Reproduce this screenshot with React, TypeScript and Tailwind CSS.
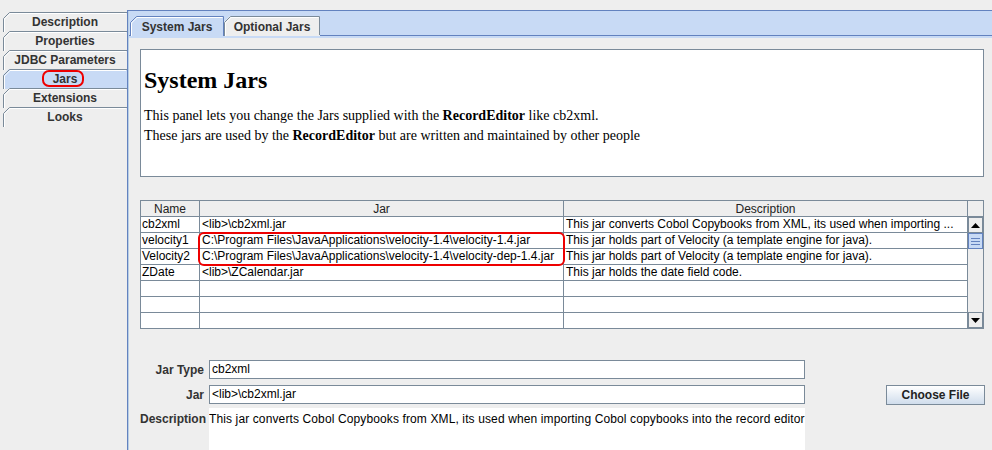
import React from "react";

function SideTab({ label, selected, circled }: { label: string; selected?: boolean; circled?: boolean }) {
  return (
    <div className="relative h-[19px] w-[124px] flex items-center justify-center">
      <svg className="absolute left-0 top-0" width="124" height="20" viewBox="0 0 124 20">
        <path d="M0 6 L6 0 H124 V20 H0 Z" fill={selected ? "#c8daf5" : "#eeeeee"} />
        <path d="M0.5 20 V6.5 L6.5 0.5 H124" fill="none" stroke="#7a8a99" />
        <path d="M1.5 20 V7 L7 1.5 H123" fill="none" stroke="#ffffff" />
      </svg>
      <span className="relative text-[12px] font-bold leading-[14px] text-[#333333] mt-[1px]">{label}</span>
      {circled ? (
        <div className="absolute left-[39px] top-[1px] w-[42px] h-[17px] rounded-[7px] border-2 border-[#ee0000]" />
      ) : null}
    </div>
  );
}

function TopTab({ label, selected, w }: { label: string; selected?: boolean; w: number }) {
  return (
    <div className="relative h-[19px] flex items-center justify-center" style={{ width: w }}>
      <svg className="absolute left-0 top-0" width={w} height="20" viewBox={`0 0 ${w} 20`}>
        <path d={`M0 6 L6 0 H${w} V20 H0 Z`} fill={selected ? "#c8daf5" : "#eeeeee"} />
        <path
          d={`M0.5 20 V6.5 L6.5 0.5 H${w - 0.5} V${selected ? 20 : 19}`}
          fill="none"
          stroke={selected ? "#6382bf" : "#7a8a99"}
        />
        <path d={`M1.5 20 V7 L7 1.5 H${w - 1.5}`} fill="none" stroke="#ffffff" />
      </svg>
      <span className="relative text-[12px] font-bold leading-[14px] text-[#333333] mt-[2px]">{label}</span>
    </div>
  );
}

const rows: [string, string, string][] = [
  ["cb2xml", "<lib>\\cb2xml.jar", "This jar converts Cobol Copybooks from XML, its used when importing ..."],
  ["velocity1", "C:\\Program Files\\JavaApplications\\velocity-1.4\\velocity-1.4.jar", "This jar holds part of Velocity (a template engine for java)."],
  ["Velocity2", "C:\\Program Files\\JavaApplications\\velocity-1.4\\velocity-dep-1.4.jar", "This jar holds part of Velocity (a template engine for java)."],
  ["ZDate", "<lib>\\ZCalendar.jar", "This jar holds the date field code."],
  ["", "", ""],
  ["", "", ""],
  ["", "", ""],
];

function ArrowBtn({ up }: { up?: boolean }) {
  return (
    <div className="h-[16px] w-[15px] border border-[#7a8a99] bg-[#eeeeee] flex items-center justify-center">
      <svg width="9" height="5" viewBox="0 0 9 5">
        {up ? <path d="M0 5 L4.5 0 L9 5 Z" fill="#000" /> : <path d="M0 0 L9 0 L4.5 5 Z" fill="#000" />}
      </svg>
    </div>
  );
}

export default function App() {
  return (
    <div className="w-[992px] h-[450px] overflow-hidden bg-[#eeeeee] flex font-['Liberation_Sans',Arial,sans-serif] text-[#222222]">
      {/* left tabs */}
      <div className="w-[127px] shrink-0 pt-[12px] pl-[3px]">
        <div className="flex flex-col border-b border-[#7a8a99]">
          <SideTab label="Description" />
          <SideTab label="Properties" />
          <SideTab label="JDBC Parameters" />
          <SideTab label="Jars" selected circled />
          <SideTab label="Extensions" />
          <SideTab label="Looks" />
        </div>
      </div>

      {/* content pane */}
      <div className="flex-1 mt-[10px] border-l border-t border-[#6382bf] flex flex-col">
        <div className="flex-1 border-l border-[#b8cfe5] flex flex-col">
          {/* tab strip */}
          <div className="h-[24px] bg-[#c8daf5] flex items-end pl-[1px]">
            <TopTab label="System Jars" selected w={94} />
            <TopTab label="Optional Jars" w={96} />
          </div>
          <div className="h-[1px] flex">
            <div className="w-[1px] bg-[#6382bf]" />
            <div className="w-[93px] bg-[#c8daf5]" />
            <div className="flex-1 bg-[#6382bf]" />
          </div>
          <div className="h-[2px] bg-[#c8daf5]" />

          {/* body */}
          <div className="flex-1 pl-[11px] pt-[11px] flex flex-col">
            {/* html panel */}
            <div className="w-[844px] h-[128px] border border-[#7a8a99] bg-white px-[3px] pt-[16px] font-['Liberation_Serif','Times_New_Roman',serif] text-black">
              <div className="text-[24px] font-bold leading-[28px]">System Jars</div>
              <div className="mt-[12px] text-[14px] leading-[20px]">
                <div>
                  This panel lets you change the Jars supplied with the <b>RecordEditor</b> like cb2xml.
                </div>
                <div>
                  These jars are used by the <b>RecordEditor</b> but are written and maintained by other people
                </div>
              </div>
            </div>

            {/* table */}
            <div className="relative mt-[23px] w-[844px] flex border-t border-l border-[#7a8a99] text-[12px] text-black">
              <div className="w-[827px] flex flex-col">
                <div className="h-[16px] flex bg-[#eeeeee]">
                  <div className="w-[59px] h-full border-r border-b border-[#7a8a99] flex items-center justify-center leading-[14px] text-[#222]">Name</div>
                  <div className="w-[364px] h-full border-r border-b border-[#7a8a99] flex items-center justify-center leading-[14px] text-[#222]">Jar</div>
                  <div className="w-[404px] h-full border-r border-b border-[#7a8a99] flex items-center justify-center leading-[14px] text-[#222]">Description</div>
                </div>
                {rows.map((r, i) => (
                  <div key={i} className="h-[16px] flex bg-white">
                    <div className="w-[59px] h-full border-r border-b border-[#7a8a99] pl-[1px] leading-[15px] whitespace-nowrap overflow-hidden">{r[0]}</div>
                    <div className="w-[364px] h-full border-r border-b border-[#7a8a99] pl-[2px] leading-[15px] whitespace-nowrap overflow-hidden">{r[1]}</div>
                    <div className="w-[404px] h-full border-r border-b border-[#7a8a99] pl-[2px] leading-[15px] whitespace-nowrap overflow-hidden">{r[2]}</div>
                  </div>
                ))}
              </div>
              <div className="w-[16px] flex flex-col">
                <div className="h-[16px] border-r border-b border-[#7a8a99] bg-[#eeeeee]" />
                <div className="h-[112px] border-r border-b border-[#7a8a99] bg-[#eeeeee] flex flex-col">
                  <ArrowBtn up />
                  <div className="h-[16px] w-[15px] border border-[#6382bf] bg-[#c8daf5] flex flex-col items-center justify-center gap-[2px]">
                    <div className="w-[9px] h-[1px] bg-[#6382bf]" />
                    <div className="w-[9px] h-[1px] bg-[#6382bf]" />
                    <div className="w-[9px] h-[1px] bg-[#6382bf]" />
                  </div>
                  <div className="flex-1" />
                  <ArrowBtn />
                </div>
              </div>
              <div className="absolute left-[57px] top-[31px] w-[367px] h-[34px] rounded-[6px] border-2 border-[#ee0000]" />
            </div>

            {/* form */}
            <div className="mt-[31px] flex flex-col text-[12px]">
              <div className="flex items-center h-[19px]">
                <div className="w-[64px] text-right font-bold text-[#333333]">Jar Type</div>
                <div className="ml-[5px] w-[596px] h-[19px] border border-[#7a8a99] bg-white pl-[2px] leading-[17px] text-black">cb2xml</div>
              </div>
              <div className="flex items-center mt-[6px] h-[19px]">
                <div className="w-[64px] text-right font-bold text-[#333333]">Jar</div>
                <div className="ml-[5px] w-[596px] h-[19px] border border-[#7a8a99] bg-white pl-[2px] leading-[17px] text-black">{"<lib>\\cb2xml.jar"}</div>
                <button className="ml-[81px] w-[99px] h-[20px] border border-[#7a8a99] bg-linear-to-b from-[#ffffff] to-[#d0ddec] font-bold text-[12px] text-[#222222] flex items-center justify-center">
                  Choose File
                </button>
              </div>
              <div className="flex mt-[4px]">
                <div className="w-[64px] text-right font-bold text-[#333333] pt-[4px] leading-[14px]">Description</div>
                <div className="ml-[5px] w-[596px] h-[50px] bg-white pt-[4px] leading-[14px] text-black whitespace-nowrap overflow-hidden tracking-[0.12px]">
                  This jar converts Cobol Copybooks from XML, its used when importing Cobol copybooks into the record editor
                </div>
              </div>
            </div>
          </div>
        </div>
      </div>
    </div>
  );
}
